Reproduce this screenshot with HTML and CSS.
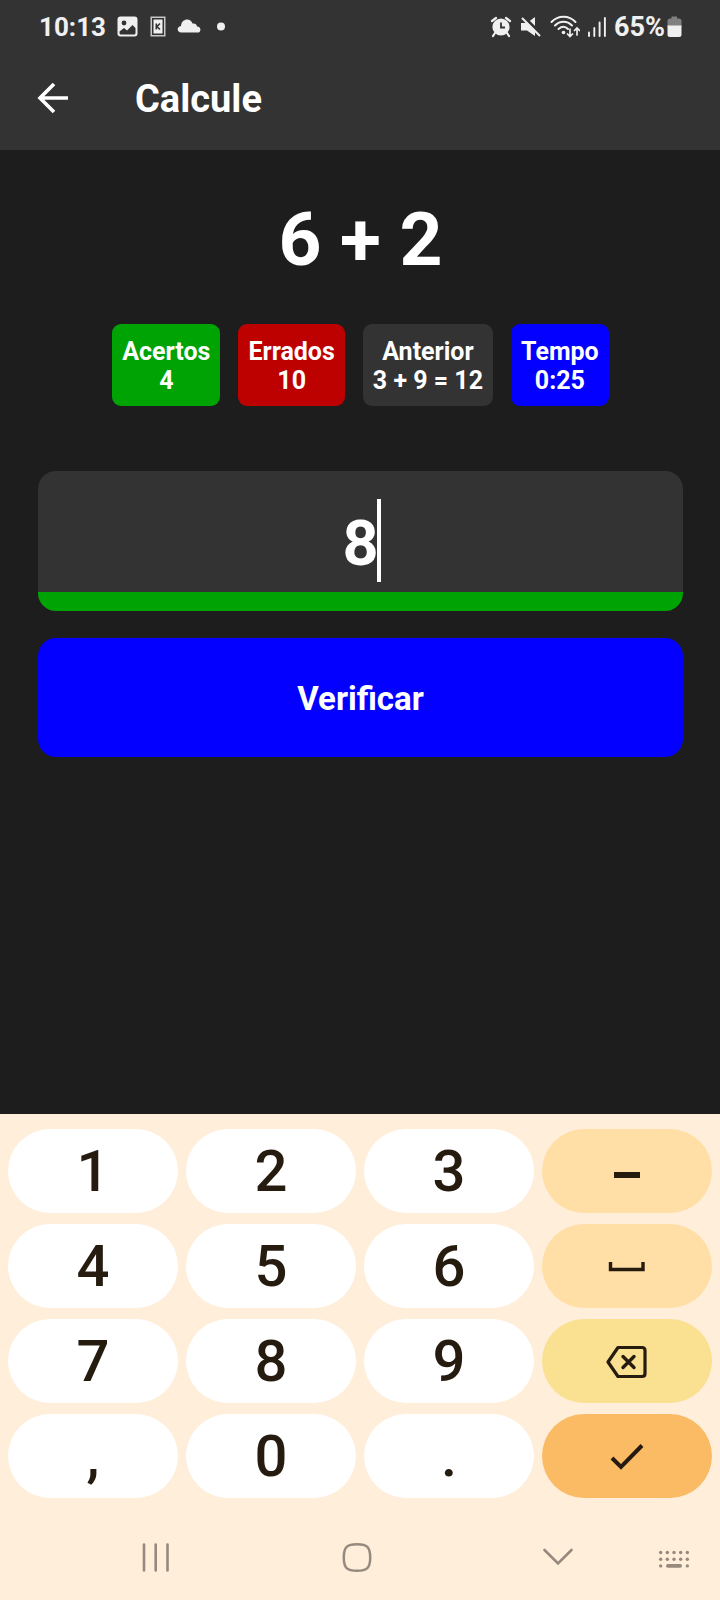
FILE: index.html
```html
<!DOCTYPE html>
<html lang="pt-BR">
<head>
<meta charset="utf-8">
<meta name="viewport" content="width=device-width, initial-scale=1">
<title>Calcule</title>
<link rel="stylesheet" href="styles.css">
</head>
<body>
<div class="screen">
  <header class="top">
    <div class="status">
      <div class="status-left">
        <span class="clock">10:13</span>
        <svg class="ico-image" width="22" height="22" viewBox="0 0 22 22" aria-hidden="true">
          <rect x="0.500" y="0.500" width="20" height="20" rx="3" fill="#f0f0f0"/>
          <circle cx="7" cy="7" r="2.400" fill="#333"/>
          <path d="M2.500 15.500 L7 12 L10 14.500 L15.500 9 L18.500 12 V17 Q18.500 18.500 17 18.500 H4 Q2.500 18.500 2.500 17 Z" fill="#333"/>
        </svg>
        <svg class="ico-card" width="16" height="22" viewBox="0 0 16 22" aria-hidden="true">
          <rect x="0.500" y="0.500" width="15" height="20" fill="#c8c8c8"/>
          <rect x="2" y="2" width="12" height="17" fill="#333"/>
          <rect x="3.500" y="3.500" width="9" height="14" fill="#f0f0f0"/>
          <path d="M6.300 7.500 V13.500 M10 7.500 L7 10.500 L10 13.500" fill="none" stroke="#333" stroke-width="1.600"/>
        </svg>
        <svg class="ico-cloud" width="24" height="22" viewBox="0 0 24 22" aria-hidden="true">
          <path d="M4.500 16.500 C-0.500 16.500 -0.500 10.500 4 10 C4.500 2.500 13.500 1.500 15.500 7.500 C18.500 7 20 9 20 10.500 C24.500 10.500 24.500 16.500 20.500 16.500 Z" fill="#f0f0f0"/>
        </svg>
        <svg width="8" height="22" viewBox="0 0 8 22" aria-hidden="true"><circle cx="4" cy="10.500" r="4" fill="#f0f0f0"/></svg>
      </div>
      <div class="status-right">
        <svg width="22" height="22" viewBox="0 0 22 22" aria-hidden="true">
          <circle cx="11" cy="11" r="8.600" fill="#f0f0f0"/>
          <path d="M2 5 L6 2 M20 5 L16 2 M5 17 L3 20 M17 17 L19 20" stroke="#f0f0f0" stroke-width="2.200" fill="none" stroke-linecap="round"/>
          <path d="M11 6.500 V11.500 H15" stroke="#333" stroke-width="1.800" fill="none"/>
        </svg>
        <svg class="ico-mute" width="22" height="22" viewBox="0 0 22 22" aria-hidden="true">
          <path d="M1 7 H7 L15 1 V20 L7 14.500 H1 Z" fill="#f0f0f0"/>
          <path d="M4 1 L21 18" stroke="#333" stroke-width="3"/>
          <path d="M2 2 L20 20" stroke="#f0f0f0" stroke-width="2"/>
        </svg>
        <svg class="ico-wifi" width="30" height="24" viewBox="0 0 30 24" aria-hidden="true">
          <g fill="none" stroke="#f0f0f0" stroke-width="2" stroke-linecap="round">
            <path d="M1.500 7 C8 0 19 0 25.500 7"/>
            <path d="M5 10.500 C10 5.500 17 5.500 22 10.500"/>
            <path d="M8.500 14 C12 11 15 11 18 14"/>
            <path d="M20 14 V21 M17.500 19 L20 21.500 L22.500 19 M27 20 V13.500 M24.500 15.500 L27 13 L29.500 15.500" stroke-width="1.700"/>
          </g>
          <circle cx="13.500" cy="17.500" r="1.800" fill="#f0f0f0"/>
        </svg>
        <svg class="ico-signal" width="18" height="22" viewBox="0 0 18 22" aria-hidden="true">
          <path d="M1 16.500 V20 M6.300 12 V20 M11.600 6.500 V20 M16.900 2 V20" stroke="#f0f0f0" stroke-width="1.900" stroke-linecap="round"/>
        </svg>
        <span class="percent">65%</span>
        <svg width="15" height="22" viewBox="0 0 15 22" aria-hidden="true">
          <path d="M4.500 0.500 H10 V2.500 H12 Q14.500 2.500 14.500 5 V11 H0.500 V5 Q0.500 2.500 3 2.500 H4.500 Z" fill="#808080"/>
          <path d="M0.500 9.500 H14.500 V18.500 Q14.500 21 12 21 H3 Q0.500 21 0.500 18.500 Z" fill="#f0f0f0"/>
        </svg>
      </div>
    </div>
    <div class="appbar">
      <button class="back" type="button" aria-label="Voltar">
        <svg width="32" height="32" viewBox="0 0 32 32" aria-hidden="true">
          <path d="M31 15 H3 M17 1 L3 15 L17 29" fill="none" stroke="#fff" stroke-width="3.600"/>
        </svg>
      </button>
      <h1 class="title">Calcule</h1>
    </div>
  </header>

  <main class="game">
    <p class="expression">6 + 2</p>
    <div class="stats">
      <div class="stat stat-right">Acertos<br>4</div>
      <div class="stat stat-wrong">Errados<br>10</div>
      <div class="stat">Anterior<br>3 + 9 = 12</div>
      <div class="stat stat-time">Tempo<br>0:25</div>
    </div>
    <form class="answer">
      <div class="field">
        <input class="field-input" type="text" inputmode="numeric" value="8" aria-label="Resposta">
        <span class="cursor"></span>
      </div>
      <button class="verify" type="button">Verificar</button>
    </form>
  </main>

  <section class="keyboard" aria-label="Teclado">
    <div class="keys">
      <button class="key" type="button">1</button>
      <button class="key" type="button">2</button>
      <button class="key" type="button">3</button>
      <button class="key key-side" type="button" aria-label="Menos">
        <svg width="40" height="40" viewBox="0 0 40 40" aria-hidden="true"><path d="M7 24 H33" stroke="#261b0f" stroke-width="6"/></svg>
      </button>
      <button class="key" type="button">4</button>
      <button class="key" type="button">5</button>
      <button class="key" type="button">6</button>
      <button class="key key-side" type="button" aria-label="Espaço">
        <svg width="40" height="40" viewBox="0 0 40 40" aria-hidden="true"><path d="M3.500 16 V23.500 H36 V16" fill="none" stroke="#261b0f" stroke-width="3.400"/></svg>
      </button>
      <button class="key" type="button">7</button>
      <button class="key" type="button">8</button>
      <button class="key" type="button">9</button>
      <button class="key key-delete" type="button" aria-label="Apagar">
        <svg width="42" height="40" viewBox="0 0 42 40" aria-hidden="true">
          <path d="M12 6.500 H36 Q39 6.500 39 9.500 V32.500 Q39 35.500 36 35.500 H12 L2 21 Z" fill="none" stroke="#261b0f" stroke-width="3.200" stroke-linejoin="round"/>
          <path d="M17 15.500 L28 26.500 M28 15.500 L17 26.500" stroke="#261b0f" stroke-width="3.400" stroke-linecap="round"/>
        </svg>
      </button>
      <button class="key" type="button">,</button>
      <button class="key" type="button">0</button>
      <button class="key" type="button">.</button>
      <button class="key key-done" type="button" aria-label="Concluir">
        <svg width="40" height="40" viewBox="0 0 40 40" aria-hidden="true"><path d="M5 22 L14 31 L35 9.500" fill="none" stroke="#261b0f" stroke-width="4"/></svg>
      </button>
    </div>
    <nav class="navbar">
      <button class="nav" type="button" aria-label="Recentes">
        <svg width="30" height="32" viewBox="0 0 30 32" aria-hidden="true"><path d="M3 3.500 V29.500 M14.700 3.500 V29.500 M26.500 3.500 V29.500" stroke="#958a7d" stroke-width="2.600" stroke-linecap="round"/></svg>
      </button>
      <button class="nav" type="button" aria-label="Início">
        <svg width="32" height="32" viewBox="0 0 32 32" aria-hidden="true"><path d="M16 3.300 C26 3.300 29.200 6 29.200 16.500 C29.200 27 26 29.700 16 29.700 C6 29.700 2.800 27 2.800 16.500 C2.800 6 6 3.300 16 3.300 Z" fill="none" stroke="#958a7d" stroke-width="2.500"/></svg>
      </button>
      <button class="nav" type="button" aria-label="Ocultar teclado">
        <svg width="32" height="32" viewBox="0 0 32 32" aria-hidden="true"><path d="M2.500 9 L16 22.500 L29.500 9" fill="none" stroke="#958a7d" stroke-width="2.600" stroke-linecap="round"/></svg>
      </button>
      <button class="nav" type="button" aria-label="Trocar teclado">
        <svg width="36" height="32" viewBox="0 0 36 32" aria-hidden="true">
          <g fill="#958a7d">
            <circle cx="3" cy="11" r="1.900"/><circle cx="10.500" cy="11" r="1.900"/><circle cx="18" cy="11" r="1.900"/><circle cx="25.500" cy="11" r="1.900"/><circle cx="33" cy="11" r="1.900"/>
            <circle cx="3" cy="18.500" r="1.900"/><circle cx="10.500" cy="18.500" r="1.900"/><circle cx="18" cy="18.500" r="1.900"/><circle cx="25.500" cy="18.500" r="1.900"/><circle cx="33" cy="18.500" r="1.900"/>
            <circle cx="3" cy="26" r="1.900"/><circle cx="33" cy="26" r="1.900"/>
            <rect x="9" y="24" width="18" height="4" rx="2"/>
          </g>
        </svg>
      </button>
    </nav>
  </section>
</div>
</body>
</html>
```
FILE: styles.css
```css
* {
  box-sizing: border-box;
}

body {
  margin: 0;
  background: #1d1d1d;
  color: #fff;
  font-family: Roboto, "Liberation Sans", sans-serif;
  font-weight: 700;
}

button,
input {
  border: 0;
  padding: 0;
  margin: 0;
  background: none;
  color: inherit;
  font: inherit;
}

svg {
  display: block;
}

.screen {
  display: flex;
  flex-direction: column;
  min-height: 100vh;
}

.top {
  background: #333;
}

.status {
  display: flex;
  justify-content: space-between;
  align-items: center;
  height: 54px;
  padding: 0 38px 0 39px;
  color: #f0f0f0;
  font-size: 26px;
  line-height: 32px;
}

.status-left,
.status-right {
  display: flex;
  align-items: center;
}

.status-left {
  gap: 11px;
}

.ico-cloud {
  margin-right: 5px;
}

.status-right {
  gap: 8px;
}

.percent {
  margin-right: -6px;
  font-size: 27px;
}

.appbar {
  display: flex;
  align-items: center;
  gap: 66px;
  height: 96px;
  padding: 0 37px 6px;
}

.title {
  margin: 0;
  font-size: 38px;
  line-height: 48px;
}

.game {
  flex: 1;
  padding: 44px 37px 44px 38px;
}

.expression {
  margin: 0 0 40px;
  font-size: 75px;
  line-height: 90px;
  text-align: center;
}

.stats {
  display: flex;
  justify-content: center;
  gap: 18px;
}

.stat {
  padding: 13px 10px 11px;
  border-radius: 9px;
  background: #333;
  font-size: 25px;
  line-height: 29px;
  text-align: center;
}

.stat-right {
  background: #00a304;
}

.stat-wrong {
  background: #bd0000;
}

.stat-time,
.verify {
  background: #0400ff;
}

.answer {
  display: flex;
  flex-direction: column;
  gap: 27px;
  margin-top: 65px;
}

.field {
  position: relative;
  height: 140px;
  border-bottom: 19px solid #00a304;
  border-radius: 18px;
  background: #333;
}

.field-input {
  display: block;
  width: 100%;
  height: 100%;
  padding-top: 24px;
  outline: 0;
  font-size: 63px;
  text-align: center;
  caret-color: transparent;
}

.cursor {
  position: absolute;
  top: 28px;
  left: 50%;
  width: 4px;
  height: 83px;
  margin-left: 16px;
  background: #fff;
}

.verify {
  height: 119px;
  padding-top: 2px;
  border-radius: 18px;
  font-size: 33px;
}

.keyboard {
  background: #ffeeda;
  color: #261b0f;
}

.keys {
  display: grid;
  grid-template-columns: repeat(4, 1fr);
  gap: 11px 8px;
  padding: 15px 8px;
}

.key {
  display: flex;
  justify-content: center;
  align-items: center;
  height: 84px;
  border-radius: 42px;
  background: #fff;
  font-size: 58px;
  font-weight: 500;
  line-height: 68px;
}

.key-side {
  background: #ffdfa6;
}

.key-delete {
  background: #fae091;
}

.key-done {
  background: #fabb64;
}

.navbar {
  display: grid;
  grid-template-columns: repeat(3, 1fr) 32px;
  height: 87px;
  padding: 0 30px 0 55px;
}

.nav {
  display: flex;
  justify-content: center;
  align-items: center;
}
```
